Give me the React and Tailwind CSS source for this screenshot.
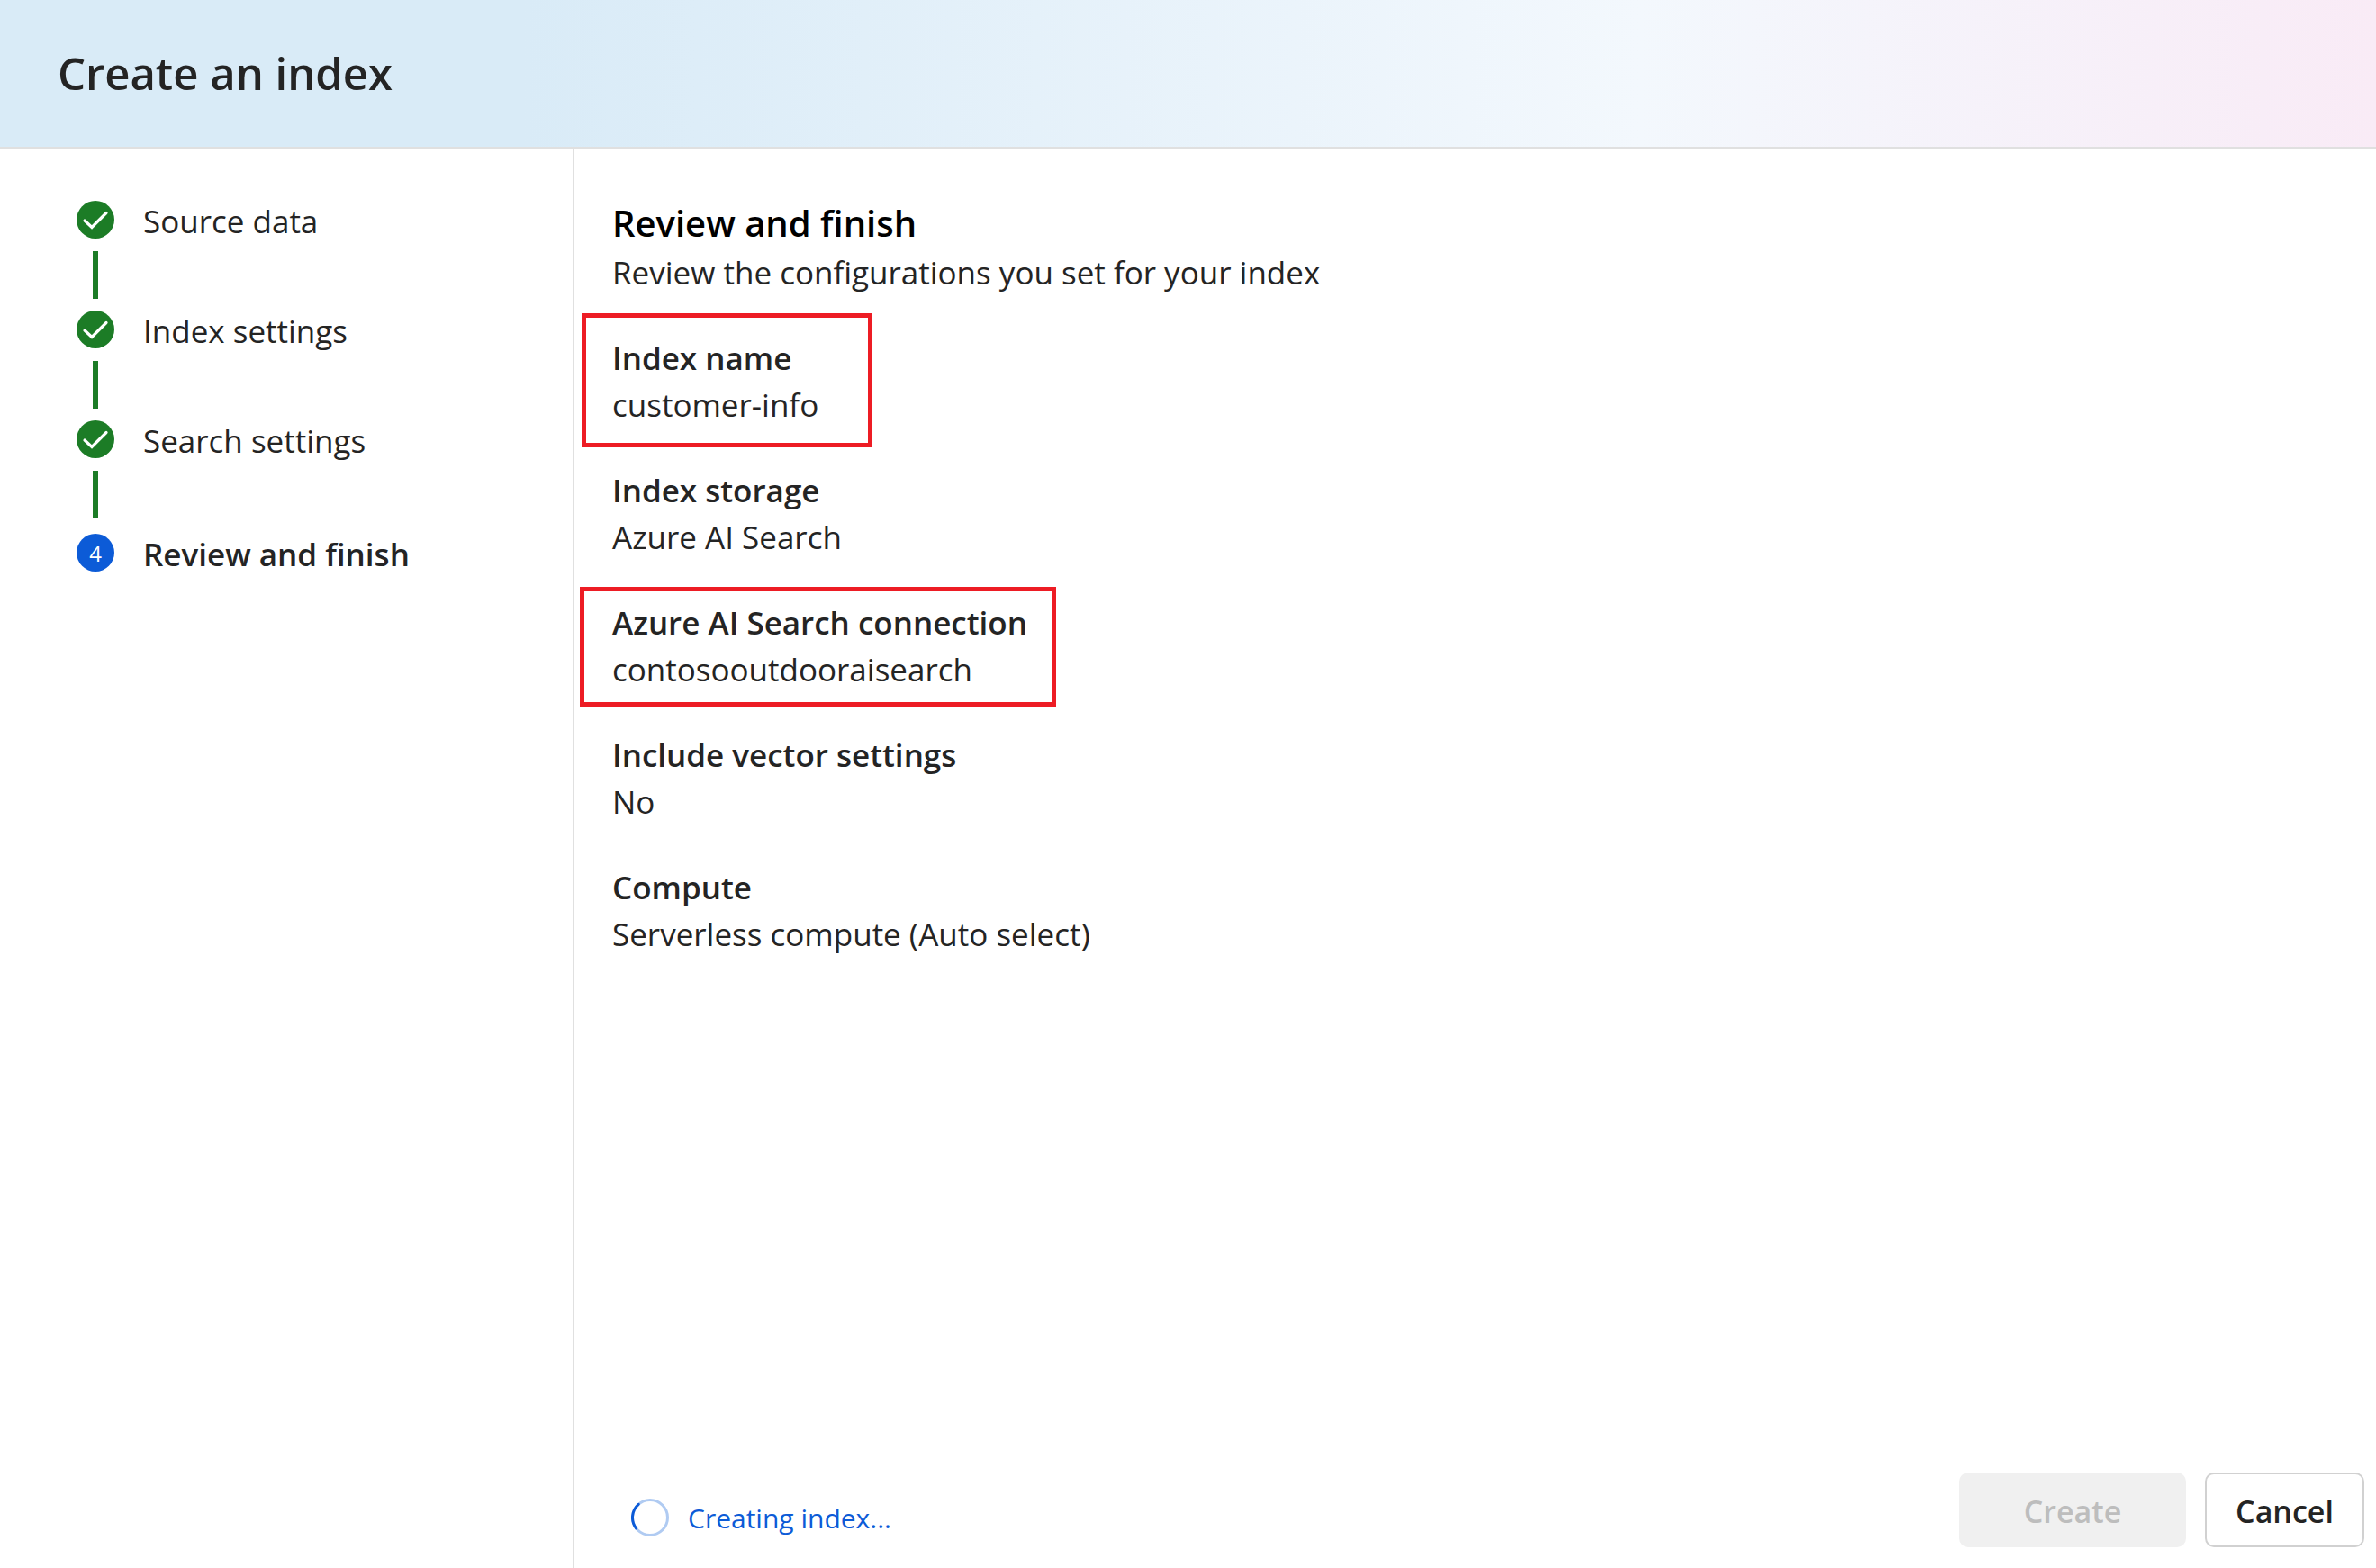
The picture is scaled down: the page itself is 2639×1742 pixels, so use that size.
const steps = [
  { label: 'Source data', done: true },
  { label: 'Index settings', done: true },
  { label: 'Search settings', done: true },
  { label: 'Review and finish', done: false },
];

const details = [
  { label: 'Index name', value: 'customer-info', frame: 'left-[-34px] top-[-24px] w-[323px] h-[149px]' },
  { label: 'Index storage', value: 'Azure AI Search' },
  { label: 'Azure AI Search connection', value: 'contosooutdooraisearch', frame: 'left-[-36px] top-[-14px] w-[529px] h-[133px]' },
  { label: 'Include vector settings', value: 'No' },
  { label: 'Compute', value: 'Serverless compute (Auto select)' },
];

function CheckCircle() {
  return (
    <svg className="size-[42px]" viewBox="0 0 42 42" fill="none" aria-hidden="true">
      <circle cx="21" cy="21" r="21" fill="#1c7c26" />
      <path d="M9 22 L17 29.5 L33 13.5" stroke="#fff" strokeWidth="3.2" strokeLinecap="round" strokeLinejoin="miter" />
    </svg>
  );
}

function Spinner() {
  return (
    <svg className="size-[42px]" viewBox="0 0 42 42" fill="none" aria-hidden="true">
      <circle cx="21" cy="21" r="19.5" stroke="#b0cbf2" strokeWidth="3" />
      <path d="M8.2 6.3 A19.5 19.5 0 0 0 5.6 33" stroke="#0c5bd7" strokeWidth="3" strokeLinecap="round" />
    </svg>
  );
}

function Step({ step, number, last }) {
  return (
    <li className={last ? 'flex gap-8 pt-1' : 'flex h-[122px] gap-8'} aria-current={last ? 'step' : undefined}>
      <div className="flex w-[42px] flex-col items-center gap-[14px]">
        {step.done ? (
          <CheckCircle />
        ) : (
          <span className="flex size-[42px] items-center justify-center rounded-full bg-[#0c5bd7] pt-0.5 text-2xl text-white">{number}</span>
        )}
        {!last && <span className="h-[53px] w-1.5 bg-[#1c7c26]" />}
      </div>
      <span className={last ? 'text-[35px] leading-[46px] font-semibold' : 'text-[35px] leading-[46px]'}>{step.label}</span>
    </li>
  );
}

export default function App() {
  return (
    <div className="flex min-h-screen flex-col bg-white font-['Open_Sans',sans-serif] text-[#242424]">
      <header className="flex h-[165px] items-center border-b-2 border-[#e0e0e0] bg-[linear-gradient(90deg,#d9ebf7_0%,#d9ebf7_22%,#f3f8fd_69%,#f9ebf6_100%)] px-16 pb-0.5">
        <h1 className="text-[49px] leading-[72px] font-semibold">Create an index</h1>
      </header>
      <div className="flex flex-1">
        <nav className="w-[638px] shrink-0 border-r-2 border-[#e0e0e0] pt-[58px] pl-[85px]" aria-label="Steps">
          <ol>
            {steps.map((step, i) => (
              <Step key={step.label} step={step} number={i + 1} last={i === steps.length - 1} />
            ))}
          </ol>
        </nav>
        <main className="flex flex-1 flex-col">
          <section className="pt-[54px] pl-[42px]">
            <h2 className="text-[40px] leading-[58px] font-semibold text-black">Review and finish</h2>
            <p className="text-[35px] leading-[52px]">Review the configurations you set for your index</p>
            <dl className="flex flex-col gap-[43px] pt-[43px]">
              {details.map((d) => (
                <div key={d.label} className="relative">
                  <dt className="text-[35px] leading-[52px] font-semibold">{d.label}</dt>
                  <dd className="text-[35px] leading-[52px]">{d.value}</dd>
                  {d.frame && <span className={'pointer-events-none absolute border-[5px] border-[#ed1c24] ' + d.frame} />}
                </div>
              ))}
            </dl>
          </section>
          <footer className="mt-auto flex items-start justify-between pr-[13px] pb-[23px] pl-[63px]">
            <div className="flex items-center gap-[21px] pt-[29px] text-[#0c5bd7]" role="status">
              <Spinner />
              <span className="pt-0.5 text-[30px] leading-[40px]">Creating index...</span>
            </div>
            <div className="flex gap-[21px] text-[34px] leading-[48px] font-semibold">
              <button type="button" disabled className="h-[83px] w-[252px] rounded-[10px] bg-[#f0f0f0] pt-0.5 text-[#bdbdbd]">Create</button>
              <button type="button" className="h-[83px] w-[177px] rounded-[10px] border-2 border-[#d1d1d1] bg-white pt-0.5">Cancel</button>
            </div>
          </footer>
        </main>
      </div>
    </div>
  );
}
